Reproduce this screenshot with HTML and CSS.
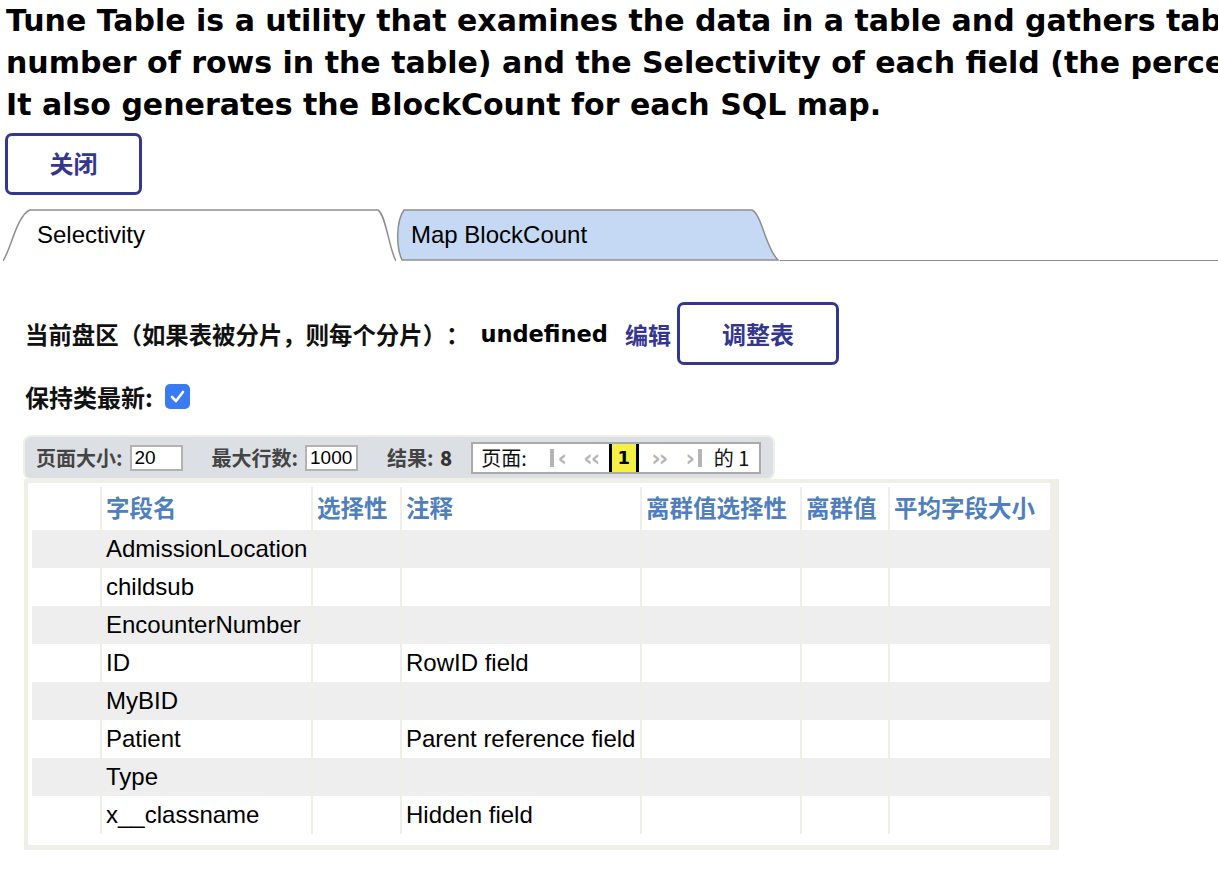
FILE: index.html
```html
<!DOCTYPE html>
<html lang="zh">
<head>
    <meta charset="UTF-8">
    <title>Tune Table</title>
    <link rel="stylesheet" href="styles.css">
</head>
<body>
    <h1 class="intro">Tune Table is a utility that examines the data in a table and gathers table statistics such as the ExtentSize (the<br>number of rows in the table) and the Selectivity of each field (the percentage of rows in the table that have a given value for that field).<br>It also generates the BlockCount for each SQL map.</h1>
    <button class="btn close-btn">关闭</button>

    <div class="tabs">
        <div class="tab active">
            <svg class="tab-shape" width="393" height="52" viewBox="0 0 393 52">
                <path d="M0,52 C8,40 14,6 27,1 L375,1 C383,6 386,40 393,52" fill="#fff" stroke="#8e8e8e" stroke-width="1.5"/>
            </svg>
            <span class="tab-label">Selectivity</span>
        </div>
        <div class="tab">
            <svg class="tab-shape" width="384" height="52" viewBox="0 0 384 52">
                <path d="M6,51 C0,38 0,12 8,1 L356,1 C366,6 370,40 382,51 Z" fill="#c6d9f4" stroke="#8e8e8e" stroke-width="1.5"/>
            </svg>
            <span class="tab-label">Map BlockCount</span>
        </div>
        <div class="tab-fill"></div>
    </div>

    <div class="content">
        <div class="extent-row">
            <span class="label">当前盘区（如果表被分片，则每个分片）：</span>
            <span class="extent-value">undefined</span>
            <a class="edit-link" href="#">编辑</a>
            <button class="btn tune-btn">调整表</button>
        </div>
        <div class="keep-row">
            <span class="label">保持类最新:</span>
            <span class="check">
                <svg width="17" height="17" viewBox="0 0 17 17"><path d="M3,9 L7,13 L14,4" fill="none" stroke="#fff" stroke-width="2.6" stroke-linecap="round" stroke-linejoin="round"/></svg>
            </span>
        </div>

        <div class="pager">
            <span class="pager-label">页面大小:</span>
            <input class="pager-input" type="text" value="20">
            <span class="pager-label spaced">最大行数:</span>
            <input class="pager-input" type="text" value="1000">
            <span class="pager-label spaced">结果: <b>8</b></span>
            <div class="pager-nav">
                <span class="nav-text">页面:</span>
                <span class="nav-btn first"><i class="bar"></i>‹</span>
                <span class="nav-btn prev">‹‹</span>
                <span class="nav-current">1</span>
                <span class="nav-btn next">››</span>
                <span class="nav-btn last">›<i class="bar"></i></span>
                <span class="nav-text total">的 1</span>
            </div>
        </div>

        <div class="grid-frame">
            <table class="grid">
                <colgroup>
                    <col style="width:69px"><col style="width:211px"><col style="width:89px"><col style="width:240px"><col style="width:160px"><col style="width:88px"><col style="width:161px">
                </colgroup>
                <thead>
                    <tr>
                        <th></th>
                        <th>字段名</th>
                        <th>选择性</th>
                        <th>注释</th>
                        <th>离群值选择性</th>
                        <th>离群值</th>
                        <th>平均字段大小</th>
                    </tr>
                </thead>
                <tbody>
                    <tr><td></td><td>AdmissionLocation</td><td></td><td></td><td></td><td></td><td></td></tr>
                    <tr><td></td><td>childsub</td><td></td><td></td><td></td><td></td><td></td></tr>
                    <tr><td></td><td>EncounterNumber</td><td></td><td></td><td></td><td></td><td></td></tr>
                    <tr><td></td><td>ID</td><td></td><td>RowID field</td><td></td><td></td><td></td></tr>
                    <tr><td></td><td>MyBID</td><td></td><td></td><td></td><td></td><td></td></tr>
                    <tr><td></td><td>Patient</td><td></td><td>Parent reference field</td><td></td><td></td><td></td></tr>
                    <tr><td></td><td>Type</td><td></td><td></td><td></td><td></td><td></td></tr>
                    <tr><td></td><td>x__classname</td><td></td><td>Hidden field</td><td></td><td></td><td></td></tr>
                </tbody>
            </table>
        </div>
    </div>
</body>
</html>
```

FILE: styles.css
```css
body {
    margin: 0;
    padding: 0 5px;
    font-family: "Liberation Sans", Arial, "Noto Sans CJK SC", sans-serif;
    font-size: 24px;
    color: #000;
    background: #fff;
    overflow: hidden;
    text-spacing-trim: space-all;
}
.intro {
    margin: 0;
    padding-left: 1px;
    font-family: "DejaVu Sans", sans-serif;
    font-weight: 700;
    font-size: 30px;
    line-height: 42px;
    white-space: nowrap;
}
.btn {
    display: block;
    background: #fff;
    border: 3px solid #35378f;
    border-radius: 7px;
    color: #35378f;
    font-family: "Noto Sans CJK SC", sans-serif;
    font-weight: 700;
    font-size: 24px;
    padding: 0;
    cursor: pointer;
}
.close-btn {
    margin-top: 7px;
    width: 137px;
    height: 62px;
    padding-bottom: 3px;
}

/* tabs */
.tabs {
    display: flex;
    align-items: flex-end;
    margin-top: 14px;
    margin-left: -2px;
    height: 52px;
}
.tab {
    position: relative;
    height: 52px;
}
.tab-shape {
    position: absolute;
    left: 0;
    top: 0;
}
.tab-label {
    position: relative;
    display: block;
    line-height: 52px;
}
.tab.active {
    width: 393px;
}
.tab.active .tab-label {
    padding-left: 34px;
}
.tab:nth-child(2) {
    width: 384px;
}
.tab:nth-child(2) .tab-label {
    padding-left: 15px;
}
.tab-fill {
    flex: 1;
    margin-right: -5px;
    border-bottom: 1.5px solid #8e8e8e;
}

.content {
    padding: 0 20px;
}
.label {
    font-family: "Noto Sans CJK SC", sans-serif;
    font-weight: 700;
    font-size: 23.4px;
    color: #111;
}
.extent-row {
    display: flex;
    align-items: center;
    margin-top: 41px;
    height: 63px;
}
.extent-value {
    margin-left: 11px;
    font-family: "DejaVu Sans", sans-serif;
    font-weight: 700;
    font-size: 22.5px;
}
.edit-link {
    margin-left: 17px;
    color: #35378f;
    text-decoration: none;
    font-family: "Noto Sans CJK SC", sans-serif;
    font-weight: 700;
    font-size: 23px;
}
.tune-btn {
    margin-left: 6px;
    width: 162px;
    height: 63px;
}
.keep-row {
    display: flex;
    align-items: center;
    margin-top: 12px;
    height: 38px;
}
.keep-row .label {
    font-size: 24px;
}
.check {
    display: inline-flex;
    align-items: center;
    justify-content: center;
    margin-left: 12px;
    width: 25px;
    height: 25px;
    border-radius: 5px;
    background: #3a7bf3;
}

/* pager */
.pager {
    display: inline-flex;
    align-items: center;
    margin-top: 22px;
    height: 41px;
    padding: 0 12px 0 11px;
    background: #dcdfe4;
    border-radius: 6px;
    box-shadow: 0 0 0 2px #efefe8;
    font-family: "Noto Sans CJK SC", sans-serif;
    font-size: 20px;
}
.pager-label {
    font-weight: 700;
    color: #444;
}
.pager-label b {
    margin-left: 2px;
    color: #333;
}
.pager-label.spaced {
    margin-left: 29px;
}
.pager-input {
    margin-left: 7px;
    width: 53px;
    height: 26px;
    box-sizing: border-box;
    border: 2px solid #b2b2b2;
    padding: 0 3px;
    font-family: "Liberation Sans", Arial, sans-serif;
    font-size: 19px;
}
.pager-nav {
    display: flex;
    align-items: center;
    margin-left: 19px;
    height: 28px;
    padding: 0 10px 0 8px;
    background: #fff;
    border: 2px solid #aaa;
}
.nav-text {
    color: #111;
}
.nav-btn {
    display: inline-flex;
    align-items: center;
    justify-content: center;
    color: #b4b4b4;
    font-family: "DejaVu Sans", sans-serif;
    font-weight: 700;
    font-size: 23px;
    letter-spacing: -2px;
}
.nav-btn.first {
    margin-left: 20px;
    width: 20px;
}
.nav-btn.prev {
    margin-left: 15px;
    width: 18px;
}
.nav-btn.next {
    margin-left: 11px;
    width: 18px;
}
.nav-btn.last {
    margin-left: 16px;
    width: 21px;
}
.bar {
    display: inline-block;
    width: 4px;
    height: 18px;
    margin: 0 4px 0 1px;
    background: #b4b4b4;
}
.nav-btn.last .bar {
    margin: 0 1px 0 5px;
}
.nav-current {
    margin-left: 9px;
    width: 24px;
    height: 28px;
    line-height: 28px;
    text-align: center;
    background: #f4f046;
    border-left: 3px solid #000;
    border-right: 3px solid #000;
    font-family: "DejaVu Sans", sans-serif;
    font-weight: 700;
    font-size: 18px;
}
.nav-text.total {
    margin-left: 9px;
}

/* field table */
.grid-frame {
    width: 1018px;
    margin-top: 1px;
    margin-left: -1px;
    padding: 4px 0 11px 4px;
    border-style: solid;
    border-color: #efefe7;
    border-width: 4px 9px 5px 4px;
    background: #fff;
}
.grid {
    width: 1018px;
    border-collapse: collapse;
    table-layout: fixed;
}
.grid th, .grid td {
    padding: 0 4px;
    text-align: left;
    white-space: nowrap;
    overflow: hidden;
    border-left: 2px solid #efefe9;
}
.grid th:first-child, .grid td:first-child {
    border-left: none;
}
.grid th {
    height: 39px;
    padding-bottom: 4px;
    color: #4f80bd;
    font-family: "Noto Sans CJK SC", sans-serif;
    font-weight: 700;
    font-size: 23.5px;
}
.grid td {
    height: 38px;
}
.grid tbody tr:nth-child(odd) {
    background: #eeeeee;
}
```
